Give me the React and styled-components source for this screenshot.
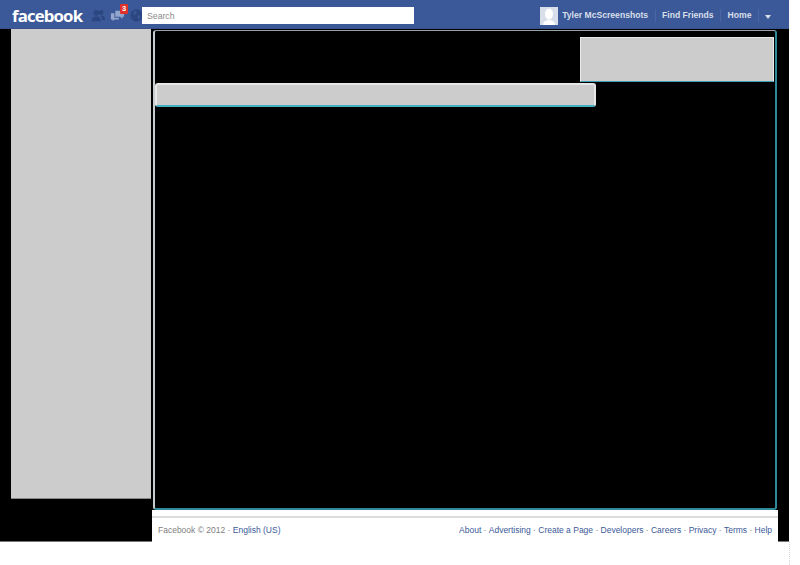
import React from 'react';
import styled, { createGlobalStyle } from 'styled-components';

const Global = createGlobalStyle`
  html, body {
    margin: 0;
    background: #fff;
    font-family: "Liberation Sans", Arial, sans-serif;
  }
`;

const Page = styled.div`
  width: 790px;
  height: 565px;
  overflow: hidden;
  display: flex;
  flex-direction: column;
`;

const BlueBar = styled.header`
  width: 789px;
  box-sizing: border-box;
  flex: 0 0 29px;
  background: #3b5998;
  box-shadow: inset 0 -1px 0 #36528c;
  display: flex;
  align-items: center;
  padding: 2px 18px 0 12px;
`;

const Logo = styled.div`
  width: 79px;
  color: #fff;
  font-family: "Open Sans", "Liberation Sans", sans-serif;
  font-size: 16.8px;
  font-weight: 700;
  letter-spacing: -0.85px;
  line-height: 27px;
`;

const Jewels = styled.div`
  display: flex;
  align-items: center;
  width: 51px;
  gap: 4px;
`;

const Jewel = styled.div`
  position: relative;
  flex: 0 0 15px;
  height: 15px;
  color: ${p => p.$color};
`;

const Badge = styled.span`
  position: absolute;
  top: -4px;
  left: 10px;
  min-width: 6px;
  height: 10px;
  padding: 0 1px;
  background: #e0312c;
  border-radius: 1px;
  color: #fff;
  font-size: 7.5px;
  font-weight: 700;
  line-height: 10px;
  text-align: center;
`;

const SearchBox = styled.input`
  position: relative;
  box-sizing: border-box;
  width: 272px;
  height: 17px;
  margin: 0;
  padding: 0 5px;
  border: 0;
  outline: 0;
  background: #fff;
  font: 8.7px "Liberation Sans", Arial, sans-serif;
  &::placeholder { color: #8a8a8a; opacity: 1; }
`;

const UserNav = styled.nav`
  margin-left: auto;
  display: flex;
  align-items: center;
`;

const Avatar = styled.div`
  width: 18px;
  height: 18px;
  background: #d8dfea;
  margin-right: 4px;
  overflow: hidden;
`;

const NavLink = styled.a`
  color: #d8dfea;
  font-size: 8.6px;
  font-weight: 700;
  padding: 0 6.5px 0 ${p => p.$first ? '0' : '6.5px'};
  border-right: 1px solid #4a67a3;
  line-height: 13px;
`;

const Caret = styled.span`
  width: 0;
  height: 0;
  margin: 2px 0 0 6px;
  border: 3.5px solid transparent;
  border-top: 4px solid #d8dfea;
  border-bottom: 0;
`;

const Body = styled.div`
  width: 789px;
  flex: 0 0 513px;
  box-sizing: border-box;
  background: #000;
  display: flex;
  border-bottom: 1px solid #777;
`;

const Sidebar = styled.aside`
  width: 140px;
  height: 470px;
  margin-left: 11px;
  background: #ccc;
  border-bottom: 1px solid #888;
  box-sizing: border-box;
`;

const Main = styled.main`
  width: 626px;
  margin-left: 1px;
  display: flex;
  flex-direction: column;
`;

const Stage = styled.section`
  box-sizing: border-box;
  width: 624px;
  height: 480px;
  margin: 1px 0 0 1px;
  padding: 6px 1px 0 0;
  border: 2px solid #2f8a9c;
  border-top: 1px solid #9aa2a6;
  border-left-color: #c4ccd0;
  border-radius: 3px;
  background: #000;
`;

const AdBox = styled.div`
  box-sizing: border-box;
  width: 194px;
  height: 45px;
  margin-left: auto;
  background: #ccc;
  border: 1px solid #e8eaea;
  border-bottom: 1px solid #3f9fb2;
`;

const Composer = styled.div`
  box-sizing: border-box;
  width: 441px;
  height: 24px;
  margin-top: 1px;
  background: #ccc;
  border: 2px solid #e6e8e8;
  border-bottom-color: #45b0c4;
  border-radius: 3px;
`;

const Footer = styled.footer`
  flex: 1;
  margin-bottom: -1px;
  padding-top: 6px;
  background: #fff;
`;

const FooterInner = styled.div`
  height: 25px;
  box-sizing: border-box;
  border-top: 2px solid #dcdcdc;
  display: flex;
  justify-content: space-between;
  align-items: center;
  padding: 0 6px;
  font-size: 8.5px;
  color: #808080;
`;

const FootLink = styled.a`
  color: #3b5998;
`;

const Dot = styled.span`
  color: #808080;
  margin: 0 2.3px;
`;

const Tail = styled.div`
  flex: 1;
  border-right: 1px dotted #d4d4d4;
`;

const friends = (
  <svg viewBox="0 0 17 17" width="15" height="15" fill="currentColor">
    <circle cx="6" cy="5.5" r="3.2" />
    <path d="M1 15c0-4 2-5.500 5-5.500s5 1.500 5 5.500z" />
    <circle cx="11.500" cy="5" r="2.700" />
    <path d="M12 8.500c2.500 0 4 1.500 4 5h-3.500c0-2-.5-3.500-1.500-4.500z" />
  </svg>
);

const messages = (
  <svg viewBox="0 0 17 17" width="15" height="15" fill="currentColor">
    <path d="M6 3h10v7h-2v2.500L11.500 10H6z" />
    <path d="M1 6h4v5h5v2H5l-2 2v-2H1z" />
  </svg>
);

const globe = (
  <svg viewBox="0 0 17 17" width="15" height="15" fill="currentColor">
    <circle cx="8.500" cy="8.500" r="7" />
    <path d="M6 3l3 1-1 3-3 1zM10 8l3 1-2 4-1-1z" fill="#3b5998" />
  </svg>
);

const silhouette = (
  <svg viewBox="0 0 18 18" width="18" height="18" fill="#fff">
    <ellipse cx="9" cy="7" rx="4" ry="5.500" />
    <path d="M3 18c0-3 2-4.500 6-5 4 .5 6 2 6 5z" />
  </svg>
);

const footerLinks = ['About', 'Advertising', 'Create a Page', 'Developers', 'Careers', 'Privacy', 'Terms', 'Help'];

export default function App() {
  return (
    <Page>
      <Global />
      <BlueBar>
        <Logo>facebook</Logo>
        <Jewels>
          <Jewel $color="#2b4680">{friends}</Jewel>
          <Jewel $color="#93a6cc">{messages}<Badge>3</Badge></Jewel>
          <Jewel $color="#2b4680">{globe}</Jewel>
        </Jewels>
        <SearchBox placeholder="Search" />
        <UserNav>
          <Avatar>{silhouette}</Avatar>
          <NavLink $first>Tyler McScreenshots</NavLink>
          <NavLink>Find Friends</NavLink>
          <NavLink>Home</NavLink>
          <Caret />
        </UserNav>
      </BlueBar>
      <Body>
        <Sidebar />
        <Main>
          <Stage>
            <AdBox />
            <Composer />
          </Stage>
          <Footer>
            <FooterInner>
              <span>Facebook © 2012 · <FootLink>English (US)</FootLink></span>
              <span>
                {footerLinks.map((l, i) => (
                  <React.Fragment key={l}>
                    {i > 0 && <Dot>·</Dot>}
                    <FootLink>{l}</FootLink>
                  </React.Fragment>
                ))}
              </span>
            </FooterInner>
          </Footer>
        </Main>
      </Body>
      <Tail />
    </Page>
  );
}
